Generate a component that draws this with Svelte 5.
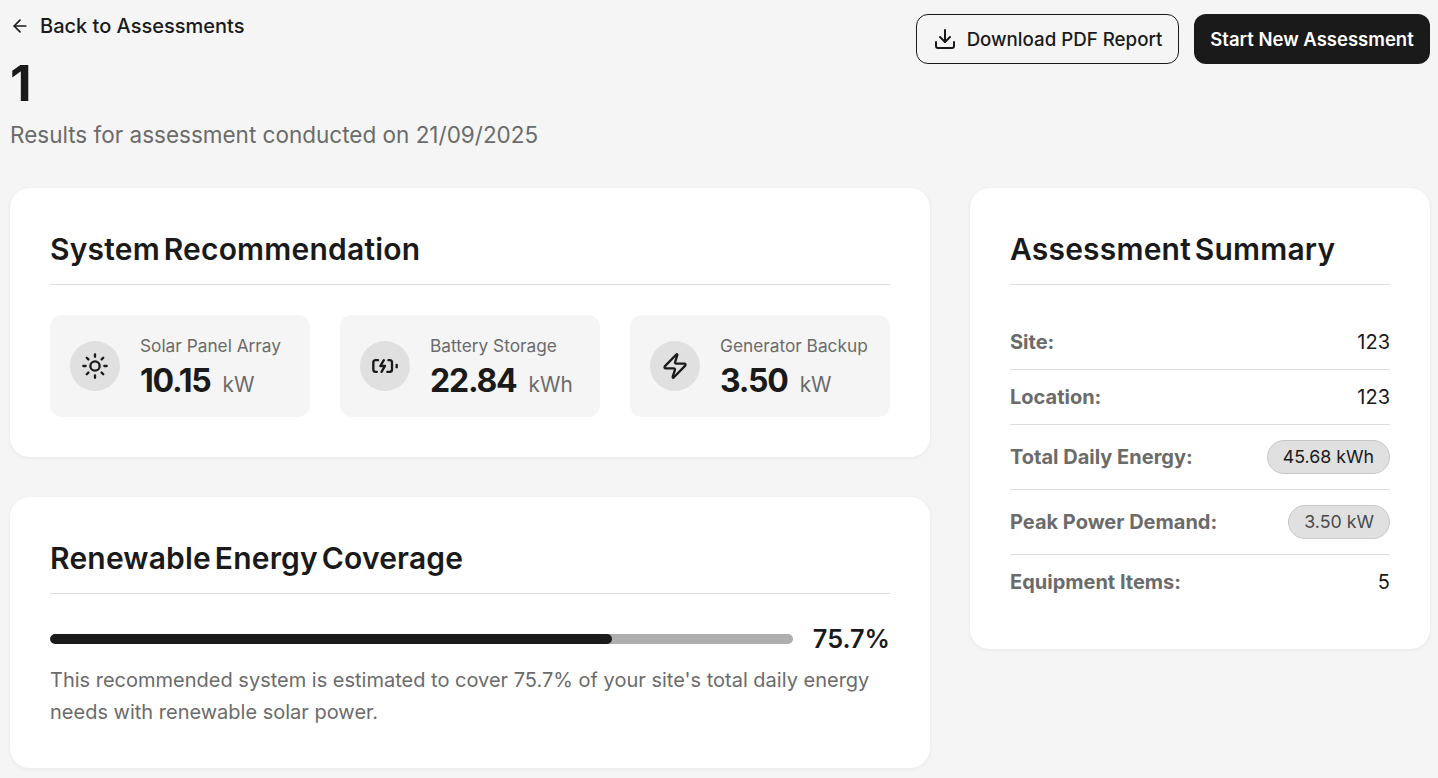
<script>
  const stats = [
    { label: 'Solar Panel Array', value: '10.15', unit: 'kW', icon: 'sun' },
    { label: 'Battery Storage', value: '22.84', unit: 'kWh', icon: 'battery' },
    { label: 'Generator Backup', value: '3.50', unit: 'kW', icon: 'zap' }
  ];
</script>

<div class="page">
  <header class="top">
    <div>
      <a class="back" href="#back">
        <svg width="20" height="20" viewBox="0 0 24 24" class="ic"><path d="m12 19-7-7 7-7" /><path d="M19 12H5" /></svg>
        Back to Assessments
      </a>
      <h1>1</h1>
      <p class="sub">Results for assessment conducted on 21/09/2025</p>
    </div>
    <div class="actions">
      <button class="btn outline">
        <svg width="24" height="24" viewBox="0 0 24 24" class="ic"><path d="M21 15v4a2 2 0 0 1-2 2H5a2 2 0 0 1-2-2v-4" /><path d="m7 10 5 5 5-5" /><path d="M12 15V3" /></svg>
        Download PDF Report
      </button>
      <button class="btn solid">Start New Assessment</button>
    </div>
  </header>

  <div class="grid">
    <div class="col">
      <section class="card">
        <h2>System Recommendation</h2>
        <div class="stats">
          {#each stats as s}
            <div class="stat">
              <div class="circle">
                <svg width="28" height="28" viewBox="0 0 24 24" class="ic">
                  {#if s.icon === 'sun'}
                    <circle cx="12" cy="12" r="4" /><path d="M12 2v2M12 20v2m-7.07-17.07 1.41 1.41m11.32 11.32 1.41 1.41M2 12h2M20 12h2M6.34 17.66l-1.41 1.41M19.07 4.93l-1.41 1.41" />
                  {:else if s.icon === 'battery'}
                    <path d="M15 7h1a2 2 0 0 1 2 2v6a2 2 0 0 1-2 2h-2" /><path d="M6 7H4a2 2 0 0 0-2 2v6a2 2 0 0 0 2 2h1" /><path d="m11 7-3 5h4l-3 5" /><path d="M22 11v2" />
                  {:else}
                    <path d="M4 14a1 1 0 0 1-.78-1.63l9.9-10.2a.5.5 0 0 1 .86.46l-1.92 6.02A1 1 0 0 0 13 10h7a1 1 0 0 1 .78 1.63l-9.9 10.2a.5.5 0 0 1-.86-.46l1.92-6.02A1 1 0 0 0 11 14z" />
                  {/if}
                </svg>
              </div>
              <div class="text">
                <div class="label">{s.label}</div>
                <div class="value"><span class="num">{s.value}</span><span class="unit">{s.unit}</span></div>
              </div>
            </div>
          {/each}
        </div>
      </section>

      <section class="card">
        <h2>Renewable Energy Coverage</h2>
        <div class="progress">
          <div class="track"><div class="fill" style="width: 75.7%"></div></div>
          <span class="pct">75.7%</span>
        </div>
        <p class="note">This recommended system is estimated to cover 75.7% of your site's total daily energy needs with renewable solar power.</p>
      </section>
    </div>

    <section class="card side">
      <h2>Assessment Summary</h2>
      <dl>
        <div class="row"><dt>Site:</dt><dd>123</dd></div>
        <div class="row"><dt>Location:</dt><dd>123</dd></div>
        <div class="row"><dt>Total Daily Energy:</dt><dd class="pill">45.68 kWh</dd></div>
        <div class="row"><dt>Peak Power Demand:</dt><dd class="pill muted">3.50 kW</dd></div>
        <div class="row"><dt>Equipment Items:</dt><dd>5</dd></div>
      </dl>
    </section>
  </div>
</div>

<style>
  :global(body) {
    margin: 0;
    background: #f5f5f5;
    color: #1a1a1a;
    font-family: Inter, "Liberation Sans", sans-serif;
  }
  .page { padding: 0 8px 10px 10px; }
  .top { display: flex; justify-content: space-between; align-items: flex-start; height: 188px; }
  .back { display: flex; align-items: center; gap: 10px; height: 24px; margin-top: 14px; font-size: 20px; line-height: 24px; font-weight: 500; color: #1a1a1a; text-decoration: none; }
  .ic { fill: none; stroke: currentColor; stroke-width: 2; stroke-linecap: round; stroke-linejoin: round; flex: none; }
  h1 { margin: 16px 0 0; font-size: 50px; line-height: 58px; font-weight: 700; letter-spacing: -2px; }
  .sub { margin: 9px 0 0; font-size: 22.5px; line-height: 28px; color: #6b6b6b; }
  .actions { display: flex; gap: 15px; margin-top: 14px; }
  .btn { display: flex; align-items: center; gap: 10px; height: 50px; box-sizing: border-box; border-radius: 12px; font: 500 18.72px Inter, sans-serif; cursor: pointer; }
  .outline { width: 263px; justify-content: center; background: transparent; color: #1a1a1a; border: 1px solid #1a1a1a; padding: 0; }
  .solid { width: 236px; justify-content: center; background: #1a1a1a; color: #fff; border: 0; padding: 0; font-weight: 600; font-size: 18.5px; }
  .grid { display: grid; grid-template-columns: 920px 460px; gap: 40px; align-items: start; }
  .col { display: flex; flex-direction: column; gap: 40px; }
  .card { background: #fff; border-radius: 20px; padding: 40px; box-shadow: 0 1px 4px rgba(0,0,0,.06); }
  h2 { margin: 0 0 30px; padding-bottom: 14px; border-bottom: 1px solid #dcdcdc; font-size: 30px; line-height: 42px; font-weight: 600; letter-spacing: .2px; word-spacing: -4px; }
  .stats { display: grid; grid-template-columns: repeat(3, 260px); gap: 30px; }
  .stat { display: flex; align-items: center; gap: 20px; height: 102px; padding: 0 20px; box-sizing: border-box; background: #f5f5f5; border-radius: 12px; }
  .circle { width: 50px; height: 50px; border-radius: 50%; background: #e0e0e0; display: flex; align-items: center; justify-content: center; flex: none; }
  .text { padding-top: 6px; }
  .label { font-size: 17.28px; line-height: 24px; color: #6b6b6b; white-space: nowrap; }
  .value { margin-top: 3px; font-size: 32px; line-height: 40px; font-weight: 700; white-space: nowrap; }
  .num { letter-spacing: -1.2px; }
  .unit { margin-left: 12px; font-size: 20.8px; font-weight: 400; color: #6b6b6b; }
  .progress { display: flex; align-items: center; gap: 20px; }
  .track { flex: 1; height: 10px; border-radius: 5px; background: #aeaeae; overflow: hidden; }
  .fill { height: 100%; border-radius: 5px; background: #1a1a1a; }
  .pct { font-size: 25.3px; line-height: 30px; font-weight: 600; }
  .note { margin: 10px 0 0; font-size: 20px; line-height: 32px; color: #6b6b6b; }
  dl { margin: 0; }
  .row { display: flex; justify-content: space-between; align-items: center; padding: 15px 0; border-bottom: 1px solid #dcdcdc; font-size: 20px; line-height: 24px; }
  .row:last-child { border-bottom: 0; }
  dt { font-weight: 700; color: #6b6b6b; }
  dd { margin: 0; }
  .pill { background: #e0e0e0; border: 1px solid #c8c8c8; border-radius: 999px; padding: 4px 15px; font-size: 17.8px; }
  .muted { color: #4a4a4a; }
</style>
